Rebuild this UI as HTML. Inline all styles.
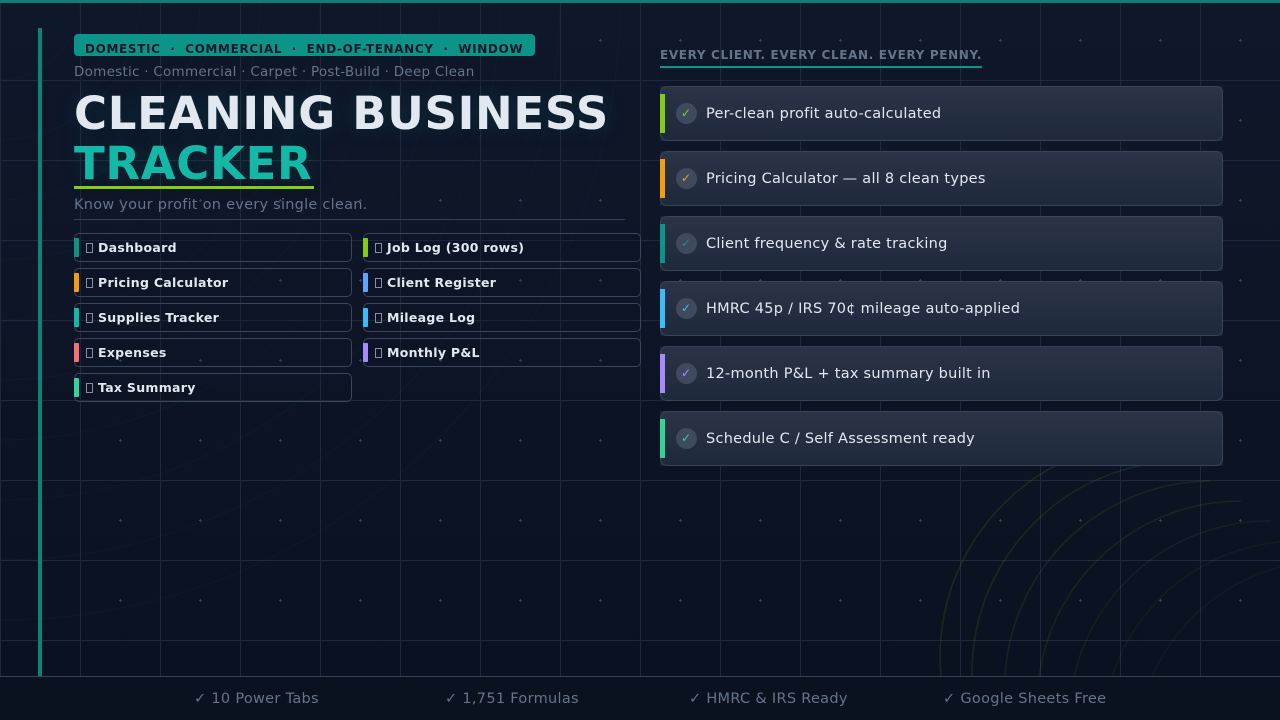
<!DOCTYPE html>
<html><head><meta charset="utf-8">
<style>
*{box-sizing:border-box;margin:0;padding:0}
html,body{width:1280px;height:720px;overflow:hidden;background:#0f172a}
body{position:relative;font-family:"DejaVu Sans","Liberation Sans",sans-serif;background:linear-gradient(180deg,#0f172a 0%,#0a1220 100%)}
.a{position:absolute;white-space:nowrap}
svg.bg{position:absolute;left:0;top:0}
.topbar{left:0;top:0;width:1280px;height:3px;background:#0d7f76}
.leftbar{left:38px;top:28px;width:4px;height:648px;background:#0d8277}
.tag{left:74px;top:34px;width:461px;height:22px;background:#0d9488;border-radius:4px;color:#0f172a;font-weight:700;font-size:12px;letter-spacing:.65px;padding:8px 0 0 11px;line-height:15px;overflow:hidden}
.sub{left:74px;top:64px;font-size:13.5px;letter-spacing:.26px;color:#64748b;line-height:17px}
.h1{left:74px;top:88px;font-size:45px;font-weight:700;letter-spacing:.7px;color:#e2e8f0;line-height:52px;text-shadow:0 0 24px rgba(13,148,136,.2)}
.h2{left:74px;top:138px;font-size:45px;font-weight:700;letter-spacing:.7px;color:#14b8a6;line-height:52px;text-shadow:0 0 24px rgba(13,148,136,.2)}
.ul{left:74px;top:186px;width:240px;height:3px;background:#84cc16}
.know{left:74px;top:196px;font-size:14.5px;letter-spacing:.25px;color:#64748b;line-height:18px}
.div{left:74px;top:219px;width:551px;height:1px;background:#334155}
.tab{position:absolute;width:278px;height:29px;border:1px solid #3a4659;border-radius:5px;background:rgba(15,23,42,.15)}
.tab i{position:absolute;left:-1px;top:4px;width:5px;height:19px;border-radius:1px}
.tab u{position:absolute;left:11px;top:9px;width:7px;height:10px;border:1px solid #8290a3}
.tab span{position:absolute;left:23px;top:6px;font-size:12.5px;font-weight:700;color:#e2e8f0;letter-spacing:.29px;line-height:16px;white-space:nowrap}
.head{left:660px;top:48px;font-size:12px;font-weight:700;letter-spacing:.65px;color:#64748b;line-height:15px}
.hul{left:660px;top:66px;width:322px;height:2px;background:#0d9488}
.card{position:absolute;left:660px;width:563px;height:55px;background:#1b2435}
.card::before{content:"";position:absolute;inset:0;border:1px solid #3a4459;border-radius:7px;background:linear-gradient(180deg,#2b3447,#1e293b)}
.card i{position:absolute;left:0;top:8px;width:5px;height:39px}
.card b{position:absolute;left:16px;top:17px;width:21px;height:21px;padding-right:1px;border-radius:50%;background:#3f4a5e;font-weight:400;font-size:12px;line-height:21px;text-align:center}
.card span{position:absolute;left:46px;top:19px;font-size:14.5px;letter-spacing:.26px;color:#e2e8f0;line-height:18px;white-space:nowrap}
.foot{left:0;top:676px;width:1280px;height:44px;background:#0a1220;border-top:1px solid #334155}
.ft{top:690px;font-size:14.5px;letter-spacing:.3px;color:#64748b;line-height:18px}
</style></head>
<body>
<svg class="bg" width="1280" height="720" viewBox="0 0 1280 720" fill="none">
<defs>
<pattern id="g" x="0" y="0" width="80" height="80" patternUnits="userSpaceOnUse">
<rect x="0" y="0" width="1" height="80" fill="#1e293b"/>
<rect x="0" y="0" width="80" height="1" fill="#1e293b"/>
<rect x="39" y="40" width="3" height="1" fill="#334155"/>
<rect x="40" y="39" width="1" height="3" fill="#334155"/>
</pattern>
</defs>
<rect width="1280" height="720" fill="url(#g)"/>
<g stroke="#0d9488" stroke-opacity=".06" stroke-width="1">
<circle cx="0" cy="0" r="80"/><circle cx="0" cy="0" r="140"/><circle cx="0" cy="0" r="200"/><circle cx="0" cy="0" r="260"/><circle cx="0" cy="0" r="320"/><circle cx="0" cy="0" r="380"/><circle cx="0" cy="0" r="440"/><circle cx="0" cy="0" r="500"/><circle cx="0" cy="0" r="560"/><circle cx="0" cy="0" r="620"/>
</g>
<g stroke="#84cc16" fill="none">
<path d="M941 677A216 216 0 0 1 1150 441" stroke-opacity=".13" stroke-width="1.5"/>
<path d="M972 677A212 212 0 0 1 1180 461" stroke-opacity=".12" stroke-width="1.5"/>
<path d="M1005 677A207 207 0 0 1 1210 481" stroke-opacity=".11" stroke-width="1.5"/>
<path d="M1039 677A204 204 0 0 1 1241 501" stroke-opacity=".1" stroke-width="1.5"/>
<path d="M1074 677A200 200 0 0 1 1271 521" stroke-opacity=".08" stroke-width="1.5"/>
<path d="M1112 677A196 196 0 0 1 1301 541" stroke-opacity=".06" stroke-width="1.5"/>
<path d="M1152 677A192 192 0 0 1 1331 561" stroke-opacity=".05" stroke-width="1.5"/>
</g>
</svg>
<div class="a topbar"></div>
<div class="a leftbar"></div>
<div class="a tag">DOMESTIC&nbsp; ·&nbsp; COMMERCIAL&nbsp; ·&nbsp; END-OF-TENANCY&nbsp; ·&nbsp; WINDOW</div>
<div class="a sub">Domestic · Commercial · Carpet · Post-Build · Deep Clean</div>
<div class="a h1">CLEANING BUSINESS</div>
<div class="a h2">TRACKER</div>
<div class="a ul"></div>
<div class="a know">Know your profit on every single clean.</div>
<div class="a div"></div>

<div class="tab" style="left:74px;top:233px"><i style="background:#0d9488"></i><u></u><span>Dashboard</span></div>
<div class="tab" style="left:74px;top:268px"><i style="background:#f59e0b"></i><u></u><span>Pricing Calculator</span></div>
<div class="tab" style="left:74px;top:303px"><i style="background:#14b8a6"></i><u></u><span>Supplies Tracker</span></div>
<div class="tab" style="left:74px;top:338px"><i style="background:#f87171"></i><u></u><span>Expenses</span></div>
<div class="tab" style="left:74px;top:373px"><i style="background:#34d399"></i><u></u><span>Tax Summary</span></div>
<div class="tab" style="left:363px;top:233px"><i style="background:#84cc16"></i><u></u><span>Job Log (300 rows)</span></div>
<div class="tab" style="left:363px;top:268px"><i style="background:#60a5fa"></i><u></u><span>Client Register</span></div>
<div class="tab" style="left:363px;top:303px"><i style="background:#38bdf8"></i><u></u><span>Mileage Log</span></div>
<div class="tab" style="left:363px;top:338px"><i style="background:#a78bfa"></i><u></u><span>Monthly P&amp;L</span></div>

<div class="a head">EVERY CLIENT. EVERY CLEAN. EVERY PENNY.</div>
<div class="a hul"></div>

<div class="card" style="top:86px"><i style="background:#84cc16"></i><b style="color:#84cc16">✓</b><span>Per-clean profit auto-calculated</span></div>
<div class="card" style="top:151px"><i style="background:#f59e0b"></i><b style="color:#f59e0b">✓</b><span>Pricing Calculator — all 8 clean types</span></div>
<div class="card" style="top:216px"><i style="background:#0d9488"></i><b style="color:#0d9488">✓</b><span>Client frequency &amp; rate tracking</span></div>
<div class="card" style="top:281px"><i style="background:#38bdf8"></i><b style="color:#38bdf8">✓</b><span>HMRC 45p / IRS 70¢ mileage auto-applied</span></div>
<div class="card" style="top:346px"><i style="background:#a78bfa"></i><b style="color:#a78bfa">✓</b><span>12-month P&amp;L + tax summary built in</span></div>
<div class="card" style="top:411px"><i style="background:#34d399"></i><b style="color:#34d399">✓</b><span>Schedule C / Self Assessment ready</span></div>

<div class="a foot"></div>
<div class="a ft" style="left:194px">✓ 10 Power Tabs</div>
<div class="a ft" style="left:445px">✓ 1,751 Formulas</div>
<div class="a ft" style="left:689px">✓ HMRC &amp; IRS Ready</div>
<div class="a ft" style="left:943px">✓ Google Sheets Free</div>
</body></html>
